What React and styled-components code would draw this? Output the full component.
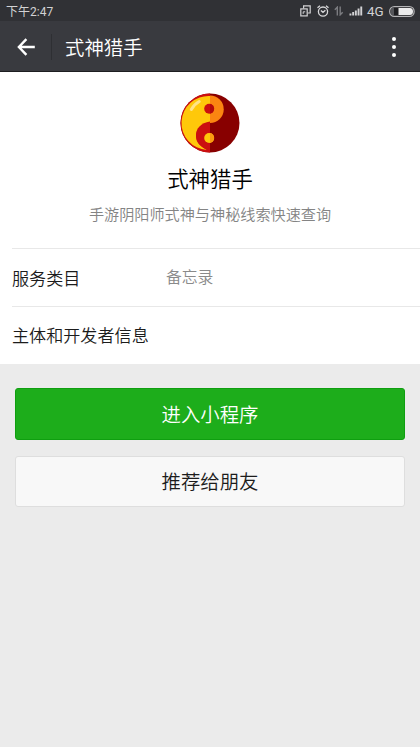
import React from 'react';
import styled, { createGlobalStyle } from 'styled-components';

const GlobalStyle = createGlobalStyle`
  body {
    margin: 0;
    background: #ebebeb;
    font-family: Roboto, "Noto Sans CJK SC", sans-serif;
    font-weight: 350;
  }
`

const Page = styled.div`
  min-height: 747px;
  background: #ebebeb;
`

const StatusBar = styled.div`
  display: flex;
  align-items: center;
  justify-content: space-between;
  box-sizing: border-box;
  height: 21px;
  padding: 1px 5px 0 6px;
  background: #303135;
  color: #d2d2d4;
`

const Clock = styled.span`
  padding-top: 2px;
  font-size: 12px;
  font-weight: 400;
  line-height: 18px;
`

const StatusIcons = styled.div`
  display: flex;
  align-items: center;

  svg {
    display: block;
  }
`

const Network = styled.span`
  width: 17px;
  margin: 1px 5px 0 4px;
  font-size: 13.4px;
  font-weight: 400;
  line-height: 19px;
`

const Header = styled.header`
  display: flex;
  align-items: center;
  box-sizing: border-box;
  height: 51px;
  padding: 2px 24px 0 17px;
  background: #393a3f;
  border-bottom: 1px solid #1d1d20;
`

const Separator = styled.div`
  width: 1px;
  height: 26px;
  margin: 0 13px 0 16px;
  background: #2e2f33;
`

const HeaderTitle = styled.h1`
  flex: 1;
  margin: 0;
  padding-top: 4px;
  font-size: 19.4px;
  font-weight: 350;
  line-height: 28px;
  color: #fff;
`

const MoreButton = styled.div`
  display: flex;
  flex-direction: column;
  gap: 4px;

  span {
    width: 4px;
    height: 4px;
    border-radius: 50%;
    background: #fff;
  }
`

const Panel = styled.section`
  box-sizing: border-box;
  height: 292px;
  background: #fff;
`

const Profile = styled.div`
  display: flex;
  flex-direction: column;
  align-items: center;
  box-sizing: border-box;
  height: 176px;
  padding-top: 21px;
`

const AppName = styled.h2`
  margin: 11px 0 0;
  font-size: 21.4px;
  font-weight: 350;
  line-height: 32px;
  color: #000;
`

const Description = styled.p`
  margin: 8px 0 0;
  font-size: 15.15px;
  line-height: 22px;
  color: #848484;
`

const Row = styled.div`
  display: flex;
  align-items: center;
  box-sizing: border-box;
  height: 58px;
  margin-left: 12px;
  border-top: 1px solid #e8e8e8;
  font-size: 17.1px;
  color: #1c1c1c;
`

const Label = styled.span`
  width: ${props => props.$wide ? 'auto' : '154px'};
  padding-top: ${props => props.$wide ? '0' : '2px'};
  line-height: 26px;
`

const Value = styled.span`
  padding-top: 1px;
  font-size: 15.8px;
  line-height: 24px;
  color: #8a8a8a;
`

const Actions = styled.div`
  display: flex;
  flex-direction: column;
  gap: 16px;
  padding: 24px 15px 0;
`

const Button = styled.button`
  box-sizing: border-box;
  height: ${props => props.$primary ? '52px' : '51px'};
  padding: 3px 0 0;
  border: 1px solid ${props => props.$primary ? '#0f9f10' : '#dedede'};
  border-radius: 3px;
  background: ${props => props.$primary ? '#1dad1b' : '#f8f8f8'};
  color: ${props => props.$primary ? '#fff' : '#1c1c1c'};
  font-family: inherit;
  font-size: 19.4px;
  font-weight: 350;
  line-height: 28px;
`

const WindowsIcon = () => (
  <svg width="11" height="12" viewBox="0 0 11 12" fill="none" stroke="#d2d2d4" strokeWidth="1.2">
    <path d="M3.6 3.4V.8H10.2V8H7.8" />
    <rect x=".8" y="3.9" width="6.4" height="7" />
    <path d="M3.2 8.9V6.8H5.2" strokeWidth="1" />
  </svg>
);

const AlarmIcon = () => (
  <svg width="12" height="12" viewBox="0 0 12 12" fill="none" stroke="#d8d8da" strokeWidth="1.3" style={{ marginLeft: 6 }}>
    <circle cx="6" cy="6.6" r="4.6" />
    <path d="M.5 2.8L3 .8M11.5 2.8L9 .8M3.9 5.4L6 7.3L8.4 5.2" />
  </svg>
);

const DataIcon = () => (
  <svg width="10" height="10" viewBox="0 0 10 10" fill="none" stroke="#7b7c80" strokeWidth="1.4" style={{ marginLeft: 5 }}>
    <path d="M3.3 9.5V1.2L.8 3.8M6.2.5V8.8L8.7 6.2" />
  </svg>
);

const signalBars = [2, 3.5, 5, 7, 9];

const SignalIcon = () => (
  <svg width="14" height="10" viewBox="0 0 14 10" fill="#d2d2d4" style={{ marginLeft: 5 }}>
    {signalBars.map((h, i) =>
      <rect key={h} x={0.5 + i * 2.7} y={9.5 - h} width="1.9" height={h} />
    )}
  </svg>
);

const BatteryIcon = () => (
  <svg width="26" height="11" viewBox="0 0 26 11">
    <rect x=".7" y=".7" width="24.4" height="9.6" rx="4.6" fill="#1f1f22" stroke="#b4b4b6" strokeWidth="1.3" />
    <path d="M5 1.2H4.8Q1.3 1.4 1.3 5.5T4.8 9.8H5Z" fill="#55565a" />
    <path d="M9.5 2H21Q24 2 24 5.5T21 9H9.5Z" fill="#ececec" />
  </svg>
);

const BackIcon = () => (
  <svg width="18" height="18" viewBox="0 0 18 18" fill="none" stroke="#fff" strokeWidth="2.4">
    <path d="M9.4 1.2L1.9 9L9.4 16.8M2 9H17.8" />
  </svg>
);

const TaijiLogo = () => (
  <svg width="60" height="60" viewBox="0 0 60 60">
    <circle cx="30" cy="30" r="29.5" fill="#880000" />
    <path d="M30 .5A29.5 29.5 0 0 0 30 59.5Z" fill="#cb0f10" />
    <path d="M30 3A27 27 0 0 0 27 57Q16 51 16 43Q16 32.5 30 30Z" fill="#ffc80a" />
    <path d="M30 2.5A13.4 13.4 0 0 1 30 30Z" fill="#fb8511" />
    <path d="M30 28.5Q16 31 16 43Q16 53 30 58Z" fill="#cb0f10" />
    <circle cx="29.2" cy="15.8" r="5" fill="#cb0f10" />
    <path d="M30 10.9A5 5 0 0 1 30 20.7Z" fill="#b30a0a" />
    <circle cx="29.2" cy="45" r="5" fill="#ffc80a" />
    <path d="M30 40.1A5 5 0 0 1 30 49.9Z" fill="#fb9a11" />
    <path d="M11.3 16.5Q14 11.5 19.2 8.5" fill="none" stroke="#ffe388" strokeWidth="3" strokeLinecap="round" />
  </svg>
);

const App = () => {
  return (
    <Page>
      <GlobalStyle />
      <StatusBar>
        <Clock>下午2:47</Clock>
        <StatusIcons>
          <WindowsIcon />
          <AlarmIcon />
          <DataIcon />
          <SignalIcon />
          <Network>4G</Network>
          <BatteryIcon />
        </StatusIcons>
      </StatusBar>
      <Header>
        <BackIcon />
        <Separator />
        <HeaderTitle>式神猎手</HeaderTitle>
        <MoreButton>
          <span />
          <span />
          <span />
        </MoreButton>
      </Header>
      <Panel>
        <Profile>
          <TaijiLogo />
          <AppName>式神猎手</AppName>
          <Description>手游阴阳师式神与神秘线索快速查询</Description>
        </Profile>
        <Row>
          <Label>服务类目</Label>
          <Value>备忘录</Value>
        </Row>
        <Row>
          <Label $wide>主体和开发者信息</Label>
        </Row>
      </Panel>
      <Actions>
        <Button $primary>进入小程序</Button>
        <Button>推荐给朋友</Button>
      </Actions>
    </Page>
  );
};

export default App;
